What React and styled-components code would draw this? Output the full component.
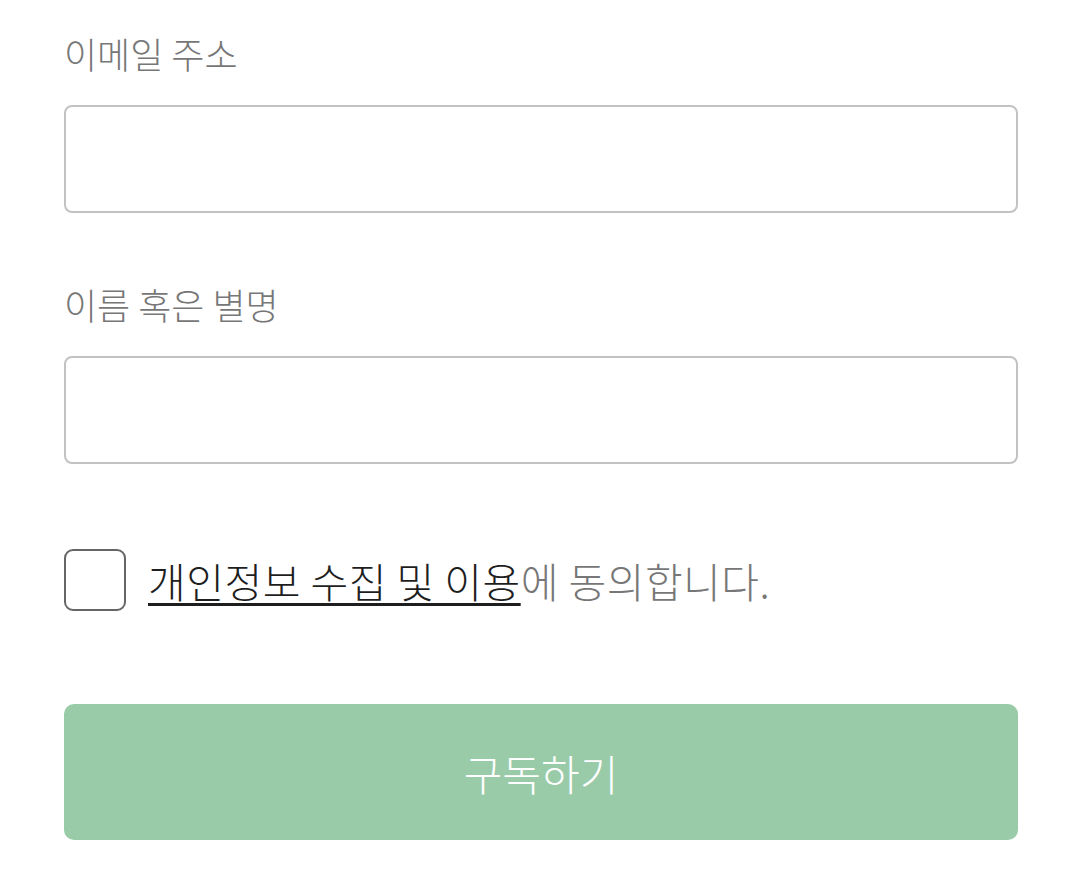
import React from "react";
import styled, { createGlobalStyle } from "styled-components";

const GlobalStyle = createGlobalStyle`
  html, body {
    margin: 0;
    padding: 0;
    background: #ffffff;
  }
  body {
    font-family: "Noto Sans CJK KR", "Noto Sans", sans-serif;
  }
`;

const App = () => {
  return (
    <>
      <GlobalStyle />
      <Form onSubmit={(e) => e.preventDefault()}>
        <Field>
          <Label htmlFor="email">이메일 주소</Label>
          <Input id="email" type="email" />
        </Field>
        <Field>
          <Label htmlFor="name">이름 혹은 별명</Label>
          <Input id="name" type="text" />
        </Field>
        <AgreeRow>
          <Checkbox type="checkbox" />
          <AgreeText>
            <PolicyLink href="#">개인정보 수집 및 이용</PolicyLink>에 동의합니다.
          </AgreeText>
        </AgreeRow>
        <SubmitButton type="submit">구독하기</SubmitButton>
      </Form>
    </>
  );
};

export default App;

const Form = styled.form`
  display: flex;
  flex-direction: column;
  padding: 27px 62px 0 64px;
`;

const Field = styled.div`
  display: flex;
  flex-direction: column;
  margin-bottom: 65px;

  & + & {
    margin-bottom: 85px;
  }
`;

const Label = styled.label`
  font-size: 36px;
  font-weight: 300;
  line-height: 52px;
  color: #777777;
  margin-bottom: 26px;
`;

const Input = styled.input`
  box-sizing: border-box;
  height: 108px;
  width: 100%;
  border: 2px solid #c2c2c2;
  border-radius: 8px;
  background: #ffffff;
  font-size: 34px;
  padding: 0 20px;
  outline: none;
`;

const AgreeRow = styled.label`
  display: flex;
  align-items: center;
  gap: 22px;
  margin-bottom: 93px;
`;

const Checkbox = styled.input`
  appearance: none;
  box-sizing: border-box;
  margin: 0;
  width: 62px;
  height: 62px;
  border: 2px solid #666666;
  border-radius: 9px;
  background: #ffffff;
`;

const AgreeText = styled.span`
  font-size: 41px;
  font-weight: 300;
  line-height: 52px;
  letter-spacing: 0.5px;
  color: #777777;
`;

const PolicyLink = styled.a`
  color: #1e1e1e;
  text-decoration: underline;
  text-decoration-thickness: 3px;
  text-underline-offset: 5px;
`;

const SubmitButton = styled.button`
  height: 136px;
  width: 100%;
  border: none;
  border-radius: 10px;
  background: #9acba9;
  color: #ffffff;
  font-family: "Noto Sans CJK KR", "Noto Sans", sans-serif;
  font-size: 42px;
  font-weight: 300;
`;
